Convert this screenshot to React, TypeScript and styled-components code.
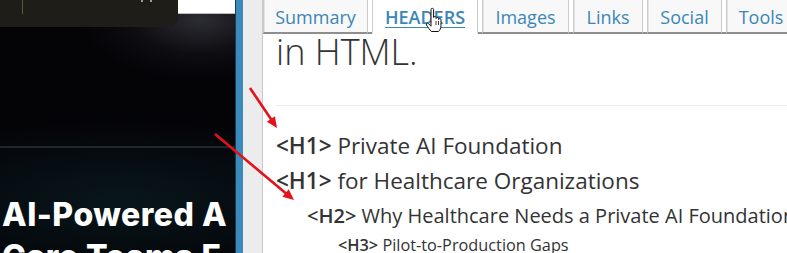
import { FunctionComponent, Fragment } from "react";
import styled, { createGlobalStyle } from "styled-components";

const GlobalStyle = createGlobalStyle`
  html, body {
    margin: 0;
    padding: 0;
    background: #ffffff;
  }
  body {
    font-family: "Open Sans", "Liberation Sans", sans-serif;
  }
`;

const Root = styled.div`
  position: relative;
  width: 787px;
  height: 253px;
  overflow: hidden;
  display: flex;
  flex-direction: row;
`;

/* ---------- left: page behind the panel ---------- */
const PageSide = styled.div`
  width: 235px;
  flex-shrink: 0;
  display: flex;
  flex-direction: column;
  overflow: hidden;
  background:
    radial-gradient(ellipse 120px 60px at 200px 20px, #2c2c33 0%, rgba(20, 20, 26, 0.6) 55%, rgba(0, 0, 0, 0) 100%),
    radial-gradient(ellipse 260px 80px at 120px 200px, #08161c 0%, rgba(0, 0, 0, 0) 100%),
    #040407;
`;
const TopStrip = styled.div`
  display: flex;
  flex-direction: row;
  align-items: flex-start;
  height: 28px;
`;
const Popup = styled.div`
  width: 178px;
  height: 27px;
  background: #1e1d17;
  border-bottom-right-radius: 9px;
  padding-left: 22px;
  box-sizing: border-box;
  display: flex;
  align-items: flex-start;
`;
const PopupRule = styled.div`
  width: 1px;
  height: 14px;
  background: #5b5a38;
`;
const PopupDots = styled.div`
  margin-left: 118px;
  display: flex;
  gap: 7px;
`;
const Dot = styled.div`
  width: 2px;
  height: 2px;
  background: #9a9a96;
`;
const WhiteField = styled.div`
  flex: 1;
  height: 13px;
  background: #ffffff;
  border-bottom: 1px solid #bdbdbd;
`;
const Band = styled.div`
  margin-top: 119px;
  height: 9px;
  border-top: 1px solid #23272b;
  border-bottom: 1px solid #23272b;
  background:
    linear-gradient(100deg, rgba(0, 0, 0, 0) 15%, rgba(40, 110, 120, 0.45) 35%, rgba(0, 0, 0, 0) 55%),
    repeating-linear-gradient(90deg, #0b0f14 0px, #0b0f14 10px, #141a22 10px, #141a22 14px);
`;
const Hero = styled.div`
  margin-top: 46px;
  padding-left: 2px;
  font-family: "Inter", "Liberation Sans", sans-serif;
  font-weight: 800;
  font-size: 32px;
  line-height: 42px;
  color: #ffffff;
  white-space: nowrap;
  letter-spacing: 0.5px;
`;

/* ---------- divider ---------- */
const BlueBar = styled.div`
  width: 7px;
  flex-shrink: 0;
  background: #3a8bbb;
  border-left: 1px solid #1f3a4a;
`;
const Gutter = styled.div`
  width: 19px;
  flex-shrink: 0;
  background: #ececec;
  border-right: 1px solid #c9c9c9;
`;

/* ---------- right: headers panel ---------- */
const Panel = styled.div`
  flex: 1;
  display: flex;
  flex-direction: column;
  background: #ffffff;
  min-width: 0;
`;
const TabRow = styled.div`
  height: 34px;
  display: flex;
  flex-direction: row;
  align-items: flex-end;
  box-sizing: border-box;
  white-space: nowrap;
`;
const Tab = styled.div<{ $active?: boolean; $w: number }>`
  width: ${(p) => p.$w}px;
  flex-shrink: 0;
  height: 34px;
  box-sizing: border-box;
  display: flex;
  align-items: center;
  justify-content: center;
  padding-top: 1px;
  font-size: 18px;
  color: #3b86b6;
  background: ${(p) => (p.$active ? "#ffffff" : "#f8f8f8")};
  border: 1px solid #cbcbcb;
  border-top: none;
  box-shadow: ${(p) => (p.$active ? "none" : "inset 1px 0 0 #e4e4e4")};
  border-bottom: ${(p) => (p.$active ? "2px solid #ffffff" : "2px solid #8e8e8e")};
  text-decoration: ${(p) => (p.$active ? "underline" : "none")};
  text-underline-offset: 3px;
  font-weight: ${(p) => (p.$active ? 600 : 400)};
`;
const TabGap = styled.div`
  width: 4px;
  flex-shrink: 0;
  height: 34px;
  border-bottom: 2px solid #8e8e8e;
  box-sizing: border-box;
`;
const Content = styled.div`
  padding-left: 13px;
  display: flex;
  flex-direction: column;
`;
const HtmlTitle = styled.div`
  font-size: 36px;
  font-weight: 300;
  line-height: 36px;
  color: #333333;
  white-space: nowrap;
`;
const Rule = styled.div`
  margin-top: 35px;
  margin-bottom: 22px;
  height: 1px;
  background: #ececec;
`;
const HeadingRow = styled.div<{ $size: number; $indent: number; $lh: number }>`
  padding-left: ${(p) => p.$indent}px;
  font-size: ${(p) => p.$size}px;
  line-height: ${(p) => p.$lh}px;
  color: #333333;
  white-space: nowrap;
`;
const Tag = styled.span`
  font-weight: 600;
  color: #333333;
`;

/* ---------- overlays ---------- */
const Overlay = styled.svg`
  position: absolute;
  left: 0;
  top: 0;
  pointer-events: none;
`;

type HeadingType = { level: number; text: string };

const levelStyle: Record<number, { size: number; indent: number; lh: number }> = {
  1: { size: 22.5, indent: 0, lh: 35 },
  2: { size: 20, indent: 31, lh: 36 },
  3: { size: 16.3, indent: 62, lh: 23 },
};

const headings: HeadingType[] = [
  { level: 1, text: "Private AI Foundation" },
  { level: 1, text: "for Healthcare Organizations" },
  { level: 2, text: "Why Healthcare Needs a Private AI Foundation" },
  { level: 3, text: "Pilot-to-Production Gaps" },
];

const tabs = [
  { label: "Summary", w: 105 },
  { label: "HEADERS", w: 106, active: true },
  { label: "Images", w: 87 },
  { label: "Links", w: 70 },
  { label: "Social", w: 75 },
  { label: "Tools", w: 70 },
];

const Arrow: FunctionComponent<{ x1: number; y1: number; x2: number; y2: number }> = ({ x1, y1, x2, y2 }) => {
  const a = Math.atan2(y2 - y1, x2 - x1);
  const len = 12;
  const spread = 0.42;
  const p1 = [x2 - len * Math.cos(a - spread), y2 - len * Math.sin(a - spread)];
  const p2 = [x2 - len * Math.cos(a + spread), y2 - len * Math.sin(a + spread)];
  return (
    <g>
      <line x1={x1} y1={y1} x2={x2 - 6 * Math.cos(a)} y2={y2 - 6 * Math.sin(a)} stroke="#e3121b" strokeWidth={2.6} />
      <polygon points={`${x2},${y2} ${p1[0]},${p1[1]} ${p2[0]},${p2[1]}`} fill="#e3121b" />
    </g>
  );
};

const App: FunctionComponent = () => {
  return (
    <Root>
      <GlobalStyle />
      <PageSide>
        <TopStrip>
          <Popup>
            <PopupRule />
            <PopupDots>
              <Dot />
              <Dot />
            </PopupDots>
          </Popup>
          <WhiteField />
        </TopStrip>
        <Band />
        <Hero>
          AI-Powered A
          <br />
          Care Teams E
        </Hero>
      </PageSide>
      <BlueBar />
      <Gutter />
      <Panel>
        <TabRow>
          {tabs.map((t, i) => (
            <Fragment key={t.label}>
              {i > 0 && <TabGap />}
              <Tab $w={t.w} $active={t.active}>
                {t.label}
              </Tab>
            </Fragment>
          ))}
        </TabRow>
        <Content>
          <HtmlTitle>in HTML.</HtmlTitle>
          <Rule />
          {headings.map((h, i) => {
            const s = levelStyle[h.level];
            return (
              <HeadingRow key={i} $size={s.size} $indent={s.indent} $lh={s.lh}>
                <Tag>&lt;H{h.level}&gt;</Tag> {h.text}
              </HeadingRow>
            );
          })}
        </Content>
      </Panel>
      <Overlay width={787} height={253} viewBox="0 0 787 253">
        <Arrow x1={250} y1={88} x2={277} y2={128} />
        <Arrow x1={215} y1={134} x2={294} y2={200} />
        {/* hand pointer */}
        <path
          d="M431 9.5 c0-1.6 2.6-1.6 2.6 0 v8 c0.2-1.4 2.4-1.4 2.5 0 v1 c0.2-1.4 2.4-1.4 2.5 0 v1 c0.2-1.4 2.4-1.3 2.4 0.2 v6 c0 2.5-1.2 4.5-2.5 5.8 h-7.2 c-1.5-1.6-3.5-4.4-4.8-6.5 c-0.8-1.4 0.9-2.6 2-1.4 l2.5 2.6 z"
          fill="#ffffff"
          stroke="#111111"
          strokeWidth={1}
          strokeLinejoin="round"
        />
        <line x1={436} y1={21} x2={436} y2={25} stroke="#111" strokeWidth={0.8} />
        <line x1={438.5} y1={21} x2={438.5} y2={25} stroke="#111" strokeWidth={0.8} />
      </Overlay>
    </Root>
  );
};

export default App;
